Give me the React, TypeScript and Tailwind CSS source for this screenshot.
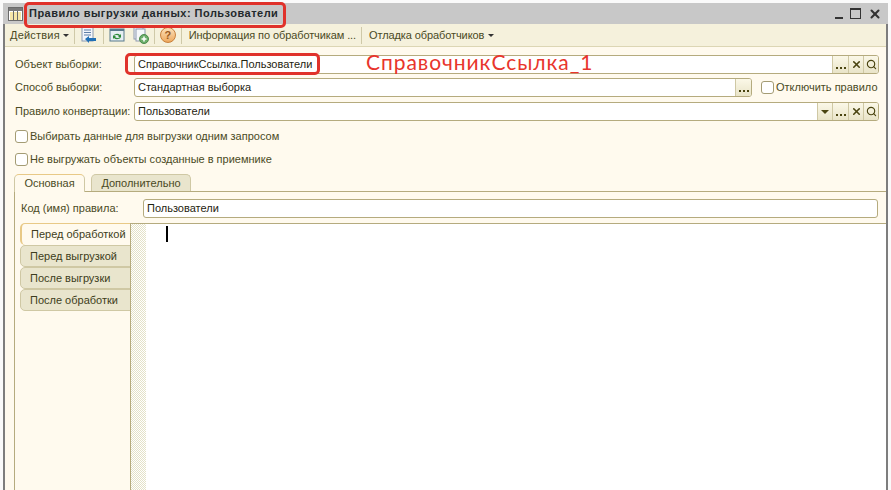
import { Search, X } from "lucide-react";

const font = "font-['Liberation_Sans',sans-serif]";

function Dots() {
  return (
    <div className="flex h-full w-[16px] items-end justify-center border-l border-[#cfc8a4] bg-gradient-to-b from-[#fbf8e8] to-[#e9e4c8] pb-[4px]">
      <div className="flex gap-[2px]">
        <i className="h-[2px] w-[2px] bg-[#4a4410]" />
        <i className="h-[2px] w-[2px] bg-[#4a4410]" />
        <i className="h-[2px] w-[2px] bg-[#4a4410]" />
      </div>
    </div>
  );
}

function ClearBtn() {
  return (
    <div className="flex h-full w-[15px] items-center justify-center border-l border-[#cfc8a4] bg-gradient-to-b from-[#fbf8e8] to-[#e9e4c8]">
      <X size={11} strokeWidth={3.5} className="text-[#4a4410]" />
    </div>
  );
}

function SearchBtn() {
  return (
    <div className="flex h-full w-[15px] items-center justify-center border-l border-[#cfc8a4] bg-gradient-to-b from-[#fbf8e8] to-[#e9e4c8]">
      <Search size={11} strokeWidth={2.5} className="text-[#4a4410]" />
    </div>
  );
}

function DropBtn() {
  return (
    <div className="flex h-full w-[15px] items-center justify-center border-l border-[#cfc8a4] bg-gradient-to-b from-[#fbf8e8] to-[#e9e4c8]">
      <div className="h-0 w-0 border-x-[4px] border-t-[4px] border-x-transparent border-t-[#4a4410]" />
    </div>
  );
}

function Field({ value, className, children }: { value: string; className: string; children?: React.ReactNode }) {
  return (
    <div className={`flex items-center overflow-hidden rounded-[3px] border border-[#b5ab7e] bg-white ${className}`}>
      <span className="flex-1 pl-[3px] text-[11px] leading-none text-[#1f2410]">{value}</span>
      {children}
    </div>
  );
}

function Check({ label }: { label: string }) {
  return (
    <div className="flex h-[14px] items-center">
      <div className="h-[13px] w-[13px] rounded-[3px] border border-[#a49c74] bg-white" />
      <span className="pl-[2px] text-[11px] leading-none text-[#4a4a24]">{label}</span>
    </div>
  );
}

function Sep() {
  return <div className="mx-[5px] h-[17px] w-px bg-[#cfc9a8]" />;
}

function SideTab({ label, active }: { label: string; active?: boolean }) {
  return (
    <div
      className={
        active
          ? "flex h-[22px] w-[111px] items-center rounded-l-[5px] border-l-2 border-t border-[#e8c987] bg-[#fffaee] pl-[9px] text-[11px] text-[#3d3d20]"
          : "flex h-[22px] w-[111px] items-center rounded-l-[5px] border border-[#cfc8a4] bg-[#e9e5cd] pl-[9px] text-[11px] text-[#3d3d20]"
      }
    >
      {label}
    </div>
  );
}

export default function App() {
  return (
    <div className={`relative h-[490px] w-[891px] overflow-hidden bg-[#fafafa] pt-[3px] ${font}`}>
      <div className="flex h-[487px] w-[888px] flex-col pl-[3px]">
        <div className="flex h-[21px] w-full items-center bg-[#c8c8c8] pl-[5px] pr-[6px]">
          <svg width="15" height="14" viewBox="0 0 15 14">
            <rect x="0.5" y="0.5" width="14" height="13" fill="#fff" stroke="#6b6b6b" />
            <rect x="1" y="1" width="13" height="3" fill="#7a7a7a" />
            <rect x="2" y="5" width="3" height="8" fill="#f6e6a8" />
            <rect x="6" y="5" width="3" height="8" fill="#f6e6a8" />
            <rect x="10" y="5" width="3" height="8" fill="#f6e6a8" />
            <path d="M5.5 4v9M9.5 4v9" stroke="#6b6b6b" />
          </svg>
          <span className="pl-[6px] text-[11px] font-bold tracking-[0.48px] text-[#23282c]">
            Правило выгрузки данных: Пользователи
          </span>
          <div className="ml-auto flex items-center gap-[7px]">
            <div className="mt-[9px] h-[2px] w-[8px] bg-[#333]" />
            <div className="h-[11px] w-[11px] border border-t-2 border-[#333]" />
            <X size={14} strokeWidth={3.5} className="text-[#333]" />
          </div>
        </div>

        <div className="flex min-h-0 flex-1 flex-col border-l-2 border-r-2 border-[#7d7d7d] bg-[#fffaee]">
          <div className="flex h-[23px] items-center border-b border-[#dcd6b4] bg-[#f5f1dc] pl-[5px] text-[11px] text-[#4a4a24]">
            <span className="tracking-[0.2px]">Действия</span>
            <div className="ml-[3px] h-0 w-0 border-x-[3px] border-t-[3px] border-x-transparent border-t-[#333]" />
            <Sep />
            <svg width="18" height="18" viewBox="0 0 18 18">
              <rect x="2" y="1" width="11" height="14" fill="#f2f5fa" stroke="#8a9ab0" />
              <path d="M4 4h7M4 6.5h7M4 9h7" stroke="#5f7fa8" />
              <path d="M5 13l4-3v2h7v3H9v2z" fill="#1f6fb5" />
            </svg>
            <Sep />
            <svg width="16" height="16" viewBox="0 0 16 16">
              <rect x="1" y="2" width="14" height="12" fill="#e6eef2" stroke="#587a8c" />
              <rect x="1" y="2" width="14" height="2" fill="#587a8c" />
              <path d="M4 9a4 3 0 0 1 7-1l1-1v3H9l1-1a3 2 0 0 0-5 0z" fill="#2e8b3a" />
              <path d="M12 10a4 3 0 0 1-7 1l-1 1V9h3l-1 1a3 2 0 0 0 5 0z" fill="#2e8b3a" />
            </svg>
            <div className="w-[8px]" />
            <svg width="16" height="18" viewBox="0 0 16 18">
              <rect x="1" y="1" width="9" height="12" fill="#eef1f6" stroke="#8f9bb0" />
              <rect x="3" y="3" width="9" height="12" fill="#f5f7fa" stroke="#8f9bb0" />
              <circle cx="11" cy="13" r="4.5" fill="#6cae6a" stroke="#4b8a4b" />
              <path d="M11 10.5v5M8.5 13h5" stroke="#fff" strokeWidth="1.5" />
            </svg>
            <Sep />
            <div className="flex h-[16px] w-[16px] items-center justify-center rounded-full border border-[#c8803a] bg-gradient-to-b from-[#fbe0b8] to-[#eda95e] text-[11px] font-bold text-[#9a5a1e]">
              ?
            </div>
            <Sep />
            <span className="ml-[2px] tracking-[-0.1px]">Информация по обработчикам ...</span>
            <Sep />
            <span className="ml-[2px] tracking-[-0.1px]">Отладка обработчиков</span>
            <div className="ml-[4px] h-0 w-0 border-x-[3px] border-t-[3px] border-x-transparent border-t-[#333]" />
          </div>

          <div className="flex flex-col pl-[10px] pr-[5px] pt-[8px]">
            <div className="flex h-[19px] items-center">
              <span className="w-[119px] text-[11px] text-[#4a4a24]">Объект выборки:</span>
              <Field value="СправочникСсылка.Пользователи" className="h-[19px] w-[745px]">
                <Dots />
                <ClearBtn />
                <SearchBtn />
              </Field>
            </div>
            <div className="mt-[4px] flex h-[19px] items-center">
              <span className="w-[119px] text-[11px] text-[#4a4a24]">Способ выборки:</span>
              <Field value="Стандартная выборка" className="h-[19px] w-[618px]">
                <Dots />
              </Field>
              <div className="ml-[9px]">
                <Check label="Отключить правило" />
              </div>
            </div>
            <div className="mt-[5px] flex h-[19px] items-center">
              <span className="w-[119px] text-[11px] text-[#4a4a24]">Правило конвертации:</span>
              <Field value="Пользователи" className="h-[19px] w-[745px]">
                <DropBtn />
                <Dots />
                <ClearBtn />
                <SearchBtn />
              </Field>
            </div>
            <div className="mt-[8px]">
              <Check label="Выбирать данные для выгрузки одним запросом" />
            </div>
            <div className="mt-[9px]">
              <Check label="Не выгружать объекты созданные в приемнике" />
            </div>

            <div className="-ml-px mt-[7px] flex h-[18px] items-end">
              <div className="z-10 -mb-px flex h-[18px] w-[71px] items-center justify-center rounded-t-[5px] border border-b-0 border-[#cfc8a4] border-t-[#e8c987] bg-[#fffaee] text-[11px] text-[#4a4a24]">
                Основная
              </div>
              <div className="ml-[6px] flex h-[17px] w-[100px] items-center justify-center rounded-t-[5px] border border-b-0 border-[#cfc8a4] bg-[#e9e5cd] text-[11px] text-[#4a4a24]">
                Дополнительно
              </div>
            </div>
          </div>

          <div className="ml-[9px] flex min-h-0 flex-1 flex-col border-l border-t border-[#b5ab7e] pt-[7px]">
            <div className="flex h-[19px] items-center pl-[6px]">
              <span className="w-[122px] text-[11px] text-[#4a4a24]">Код (имя) правила:</span>
              <Field value="Пользователи" className="h-[19px] w-[735px]" />
            </div>
            <div className="mt-[5px] flex min-h-0 flex-1 pl-[5px]">
              <div className="flex w-[110px] flex-col">
                <SideTab label="Перед обработкой" active />
                <SideTab label="Перед выгрузкой" />
                <SideTab label="После выгрузки" />
                <SideTab label="После обработки" />
              </div>
              <div className="w-[16px] border-l border-t border-[#b5ab7e] bg-[repeating-conic-gradient(#e4e2c8_0_25%,#ffffff_0_50%)] bg-[length:2px_2px]" />
              <div className="flex-1 border-t border-[#b5ab7e] bg-white pl-[20px] pt-[2px]">
                <div className="h-[16px] w-[2px] bg-black" />
              </div>
            </div>
          </div>
        </div>
      </div>

      {/* red marks drawn over the screenshot */}
      <div className="absolute left-[24px] top-[2px] h-[26px] w-[262px] rounded-[5px] border-[3px] border-[#e0322b]" />
      <div className="absolute left-[125px] top-[53px] h-[22px] w-[195px] rounded-[5px] border-[3px] border-[#e0322b]" />
      <span className="absolute left-[366px] top-[50px] font-['Lato',sans-serif] text-[21px] leading-[24px] tracking-[0.95px] text-[#e8352c]">
        СправочникСсылка_1
      </span>
    </div>
  );
}
